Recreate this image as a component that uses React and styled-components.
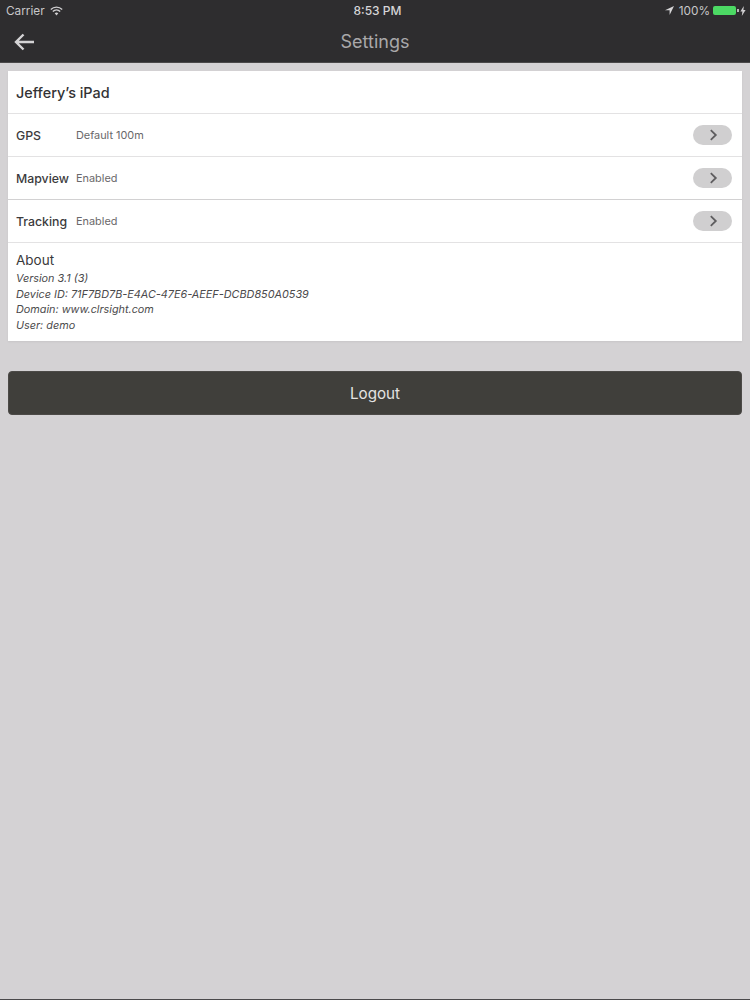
import styled, { createGlobalStyle } from "styled-components";

const GlobalStyle = createGlobalStyle`
  html, body {
    margin: 0;
    padding: 0;
    background: #d4d2d4;
  }
  * {
    box-sizing: border-box;
  }
`;

const Page = styled.div`
  width: 750px;
  height: 1000px;
  display: flex;
  flex-direction: column;
  overflow: hidden;
  font-family: Inter, "Noto Sans", sans-serif;
  background: #d4d2d4;
`;

const Header = styled.header`
  height: 63px;
  flex: none;
  background: #2e2d2f;
  border-bottom: 1px solid #4a494a;
  color: #c9c8ca;
`;

const StatusBar = styled.div`
  height: 21px;
  padding: 0 4px 0 6px;
  display: grid;
  grid-template-columns: 1fr auto 1fr;
  align-items: center;
  font-size: 11.8px;
  color: #c8c7c9;
`;

const StatusLeft = styled.div`
  display: flex;
  align-items: center;
  gap: 5px;
`;

const StatusRight = styled.div`
  display: flex;
  align-items: center;
  justify-content: flex-end;
  gap: 5px;
`;

const Clock = styled.div`
  font-weight: 500;
  font-size: 12px;
  color: #d6d5d7;
  margin-left: 3px;
`;

const Battery = styled.div`
  width: 23px;
  height: 9px;
  border-radius: 2px;
  background: #4cd964;
  position: relative;
  margin-left: -2px;
  margin-right: -1px;
  &::after {
    content: "";
    position: absolute;
    right: -3px;
    top: 3px;
    width: 2px;
    height: 3px;
    background: #b8b7b9;
  }
`;

const NavBar = styled.div`
  height: 41px;
  display: grid;
  grid-template-columns: 1fr auto 1fr;
  align-items: center;
  padding: 0 14px;
`;

const BackButton = styled.div`
  display: flex;
  align-items: center;
`;

const Title = styled.div`
  font-size: 18px;
  color: #a9a8aa;
`;

const Content = styled.main`
  flex: 1;
  padding: 8px 8px 0;
  display: flex;
  flex-direction: column;
`;

const Card = styled.section`
  background: #fff;
  box-shadow: 0 1px 2px rgba(0, 0, 0, 0.06);
`;

const DeviceName = styled.div`
  height: 43px;
  padding: 0 8px;
  display: flex;
  align-items: center;
  font-size: 14.4px;
  font-weight: 500;
  color: #333234;
  border-bottom: 1px solid #e3e2e3;
`;

const Row = styled.div`
  height: 43px;
  padding: 0 10px 0 8px;
  display: flex;
  align-items: center;
  border-bottom: 1px solid ${(p) => (p.$strong ? "#d2d1d2" : "#e3e2e3")};
`;

const RowLabel = styled.div`
  width: 60px;
  flex: none;
  font-size: 12.3px;
  font-weight: 500;
  color: #3c3b3d;
`;

const RowValue = styled.div`
  flex: 1;
  font-size: 10.9px;
  color: #69686a;
`;

const Chevron = styled.div`
  width: 39px;
  height: 20px;
  border-radius: 10px;
  background: #d0cfd0;
  display: flex;
  align-items: center;
  justify-content: center;
  padding-left: 2px;
`;

const About = styled.div`
  height: 98px;
  padding: 9px 8px 0;
`;

const AboutTitle = styled.div`
  font-size: 13.5px;
  line-height: 17px;
  color: #3a393b;
  margin-bottom: 2px;
`;

const AboutLine = styled.div`
  font-size: 10.85px;
  line-height: 15.6px;
  font-style: italic;
  color: #4b4a4c;
`;

const LogoutButton = styled.button`
  width: 100%;
  height: 44px;
  margin-top: 30px;
  border: 1px solid #4c4a47;
  border-radius: 4px;
  background: #403f3b;
  color: #e4e3e2;
  font-family: inherit;
  font-size: 15.2px;
  padding: 0;
`;

const BottomEdge = styled.div`
  height: 1px;
  flex: none;
  background: #4a494b;
`;

const Wifi = () => (
  <svg width="13" height="10" viewBox="0 0 13 10">
    <path d="M0.8 3.4a8.2 8.2 0 0 1 11.4 0" fill="none" stroke="#d0cfd1" strokeWidth="1.4" />
    <path d="M2.8 5.4a5.4 5.4 0 0 1 7.4 0" fill="none" stroke="#d0cfd1" strokeWidth="1.4" />
    <path d="M4.7 7.3a2.7 2.7 0 0 1 3.6 0L6.5 9.4z" fill="#d0cfd1" />
  </svg>
);

const Location = () => (
  <svg width="9" height="9" viewBox="0 0 9 9">
    <path d="M9 0L0 4.2h4.6V9z" fill="#d8d7d9" />
  </svg>
);

const Bolt = () => (
  <svg width="6" height="10" viewBox="0 0 6 10">
    <path d="M3.8 0L0.4 5.6h2L1.8 10l3.8-6H3.4z" fill="#d0cfd1" />
  </svg>
);

const BackArrow = () => (
  <svg width="21" height="18" viewBox="0 0 21 18">
    <path
      d="M20 9H2.5M9.5 1.5L2 9l7.5 7.5"
      fill="none"
      stroke="#d4d3d5"
      strokeWidth="2.4"
    />
  </svg>
);

const ChevronIcon = () => (
  <svg width="9" height="12" viewBox="0 0 9 12">
    <path d="M1.8 1.2L6.8 6l-5 4.8" fill="none" stroke="#5e5d5f" strokeWidth="1.8" />
  </svg>
);

const rows = [
  { label: "GPS", value: "Default 100m" },
  { label: "Mapview", value: "Enabled", strong: true },
  { label: "Tracking", value: "Enabled" },
];

const aboutLines = [
  "Version 3.1 (3)",
  "Device ID: 71F7BD7B-E4AC-47E6-AEEF-DCBD850A0539",
  "Domain: www.clrsight.com",
  "User: demo",
];

export default function App() {
  return (
    <Page>
      <GlobalStyle />
      <Header>
        <StatusBar>
          <StatusLeft>
            Carrier
            <Wifi />
          </StatusLeft>
          <Clock>8:53 PM</Clock>
          <StatusRight>
            <Location />
            100%
            <Battery />
            <Bolt />
          </StatusRight>
        </StatusBar>
        <NavBar>
          <BackButton>
            <BackArrow />
          </BackButton>
          <Title>Settings</Title>
        </NavBar>
      </Header>
      <Content>
        <Card>
          <DeviceName>Jeffery’s iPad</DeviceName>
          {rows.map((row) => (
            <Row key={row.label} $strong={row.strong}>
              <RowLabel>{row.label}</RowLabel>
              <RowValue>{row.value}</RowValue>
              <Chevron>
                <ChevronIcon />
              </Chevron>
            </Row>
          ))}
          <About>
            <AboutTitle>About</AboutTitle>
            {aboutLines.map((line) => (
              <AboutLine key={line}>{line}</AboutLine>
            ))}
          </About>
        </Card>
        <LogoutButton>Logout</LogoutButton>
      </Content>
      <BottomEdge />
    </Page>
  );
}
